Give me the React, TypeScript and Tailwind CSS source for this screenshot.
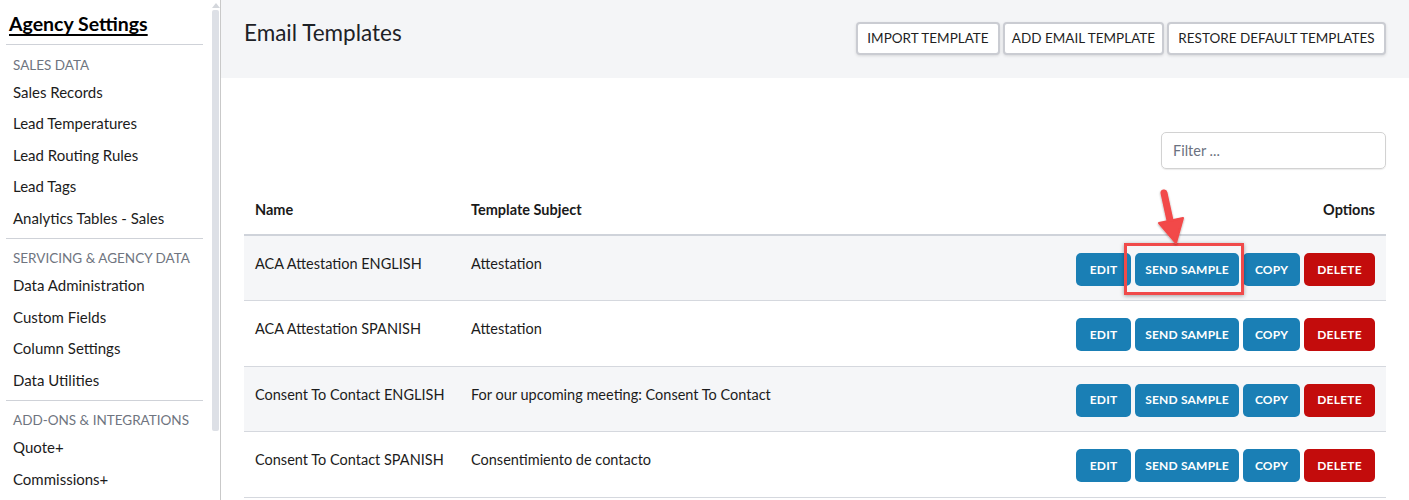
import React from "react";

const font = { fontFamily: "Lato, 'Noto Sans', sans-serif" };

const sections = [
  { title: "SALES DATA", items: ["Sales Records", "Lead Temperatures", "Lead Routing Rules", "Lead Tags", "Analytics Tables - Sales"] },
  { title: "SERVICING & AGENCY DATA", items: ["Data Administration", "Custom Fields", "Column Settings", "Data Utilities"] },
  { title: "ADD-ONS & INTEGRATIONS", items: ["Quote+", "Commissions+"] },
];

const rows = [
  { name: "ACA Attestation ENGLISH", subject: "Attestation" },
  { name: "ACA Attestation SPANISH", subject: "Attestation" },
  { name: "Consent To Contact ENGLISH", subject: "For our upcoming meeting: Consent To Contact" },
  { name: "Consent To Contact SPANISH", subject: "Consentimiento de contacto" },
];

function Sidebar() {
  return (
    <div className="flex h-[500px] w-[221px] shrink-0">
      <div className="w-[211px] shrink-0 overflow-hidden">
        <div className="flex h-[44px] items-center pl-[9px] pt-[4px]">
          <span className="text-[19.5px] font-bold text-black underline underline-offset-[3px] decoration-[2px]">Agency Settings</span>
        </div>
        {sections.map((s) => (
          <div key={s.title}>
            <div className="mx-[6px] h-px w-[197px] bg-[#cfd2d8]" />
            <div className="pt-[9px] pb-[4px]">
              <div className="flex h-[22px] items-center px-[13px] text-[13.5px] text-[#6f7580] whitespace-nowrap">{s.title}</div>
              {s.items.map((it) => (
                <div key={it} className="flex h-[31.5px] items-center px-[13px] text-[15px] text-[#1c1c1c] whitespace-nowrap">
                  {it}
                </div>
              ))}
            </div>
          </div>
        ))}
      </div>
      <div className="relative flex w-[9px] shrink-0 flex-col items-center">
        <div className="mt-[3px] h-0 w-0 border-x-[4px] border-b-[5px] border-x-transparent border-b-[#d4d7dc]" />
        <div className="mt-[2px] h-[421px] w-[7px] rounded-[2px] bg-[#dde0e6]" />
      </div>
      <div className="w-px bg-[#c9c9c9]" />
    </div>
  );
}

function TopButton({ children, w }: { children: React.ReactNode; w: string }) {
  return (
    <button className={`${w} h-[33px] rounded-[4px] border-2 border-[#caccd2] bg-white text-[13.5px] text-[#1f1f1f] shadow-[0_1px_3px_rgba(0,0,0,0.12)] whitespace-nowrap`}>
      {children}
    </button>
  );
}

function ActionButton({ children, w, red }: { children: React.ReactNode; w: string; red?: boolean }) {
  return (
    <button
      className={`${w} h-[33px] rounded-[5px] text-[12px] font-bold tracking-[0.2px] text-white ${red ? "bg-[#c30c0c]" : "bg-[#1a7fb5]"}`}
    >
      {children}
    </button>
  );
}

export default function App() {
  return (
    <div className="flex h-[500px] w-[1409px] overflow-hidden bg-white" style={font}>
      <Sidebar />
      <div className="flex-1">
        <div className="flex h-[78px] items-start justify-between bg-[#f4f5f7] pl-[23px] pr-[23px]">
          <h1 className="mt-[16px] text-[22.5px] text-[#1d2126]">Email Templates</h1>
          <div className="mt-[22px] flex gap-[3px]">
            <TopButton w="w-[144px]">IMPORT TEMPLATE</TopButton>
            <TopButton w="w-[161px]">ADD EMAIL TEMPLATE</TopButton>
            <TopButton w="w-[219px]">RESTORE DEFAULT TEMPLATES</TopButton>
          </div>
        </div>
        <div className="pl-[23px] pr-[23px]">
          <div className="mt-[54px] flex justify-end">
            <input
              placeholder="Filter ..."
              className="h-[37px] w-[225px] rounded-[5px] border border-[#d2d2d2] px-[11px] text-[14.5px] text-[#333] placeholder:text-[#6b7280] shadow-[0_1px_1px_rgba(0,0,0,0.08)] outline-none"
              style={font}
            />
          </div>
          <div className="relative mt-[16px]">
            <table className="w-full border-collapse">
              <thead>
                <tr className="border-b-2 border-[#cfd3da]">
                  <th className="h-[50px] w-[216px] pl-[11px] text-left text-[14.5px] font-bold text-[#1a1a1a]">Name</th>
                  <th className="pl-[11px] text-left text-[14.5px] font-bold text-[#1a1a1a]">Template Subject</th>
                  <th className="pr-[11px] text-right text-[14.5px] font-bold text-[#1a1a1a]">Options</th>
                </tr>
              </thead>
              <tbody>
                {rows.map((r, i) => (
                  <tr key={i} className={`border-b border-[#d5d8de] ${i % 2 === 0 ? "bg-[#f5f6f8]" : "bg-white"}`}>
                    <td className="h-[65.5px] pl-[11px] pt-[17px] align-top text-[14.5px] text-[#1c1c1c] whitespace-nowrap">{r.name}</td>
                    <td className="pl-[11px] pt-[17px] align-top text-[14.5px] text-[#1c1c1c] whitespace-nowrap">{r.subject}</td>
                    <td className="pr-[11px] pt-[17px] align-top">
                      <div className="flex justify-end gap-[4px]">
                        <ActionButton w="w-[55px]">EDIT</ActionButton>
                        <ActionButton w="w-[104px]">SEND SAMPLE</ActionButton>
                        <ActionButton w="w-[57px]">COPY</ActionButton>
                        <ActionButton w="w-[71px]" red>DELETE</ActionButton>
                      </div>
                    </td>
                  </tr>
                ))}
              </tbody>
            </table>
            {/* highlight box */}
            <div className="pointer-events-none absolute left-[880px] top-[58px] h-[52px] w-[120px] border-[3px] border-[#f04a4a] shadow-[0_1px_4px_rgba(0,0,0,0.35)]" />
            {/* arrow */}
            <svg className="pointer-events-none absolute left-[900px] top-[0px]" width="60" height="66" viewBox="0 0 60 66">
              <defs>
                <filter id="sh" x="-30%" y="-30%" width="160%" height="160%">
                  <feDropShadow dx="0" dy="1" stdDeviation="1.2" floodOpacity="0.35" />
                </filter>
              </defs>
              <g filter="url(#sh)">
                <path d="M20 8 L27 40" stroke="#f24848" strokeWidth="7" strokeLinecap="round" fill="none" />
                <path d="M15 38 L39 33 L32 58 Z" fill="#f24848" stroke="#f24848" strokeWidth="2" strokeLinejoin="round" />
              </g>
            </svg>
          </div>
        </div>
      </div>
    </div>
  );
}
